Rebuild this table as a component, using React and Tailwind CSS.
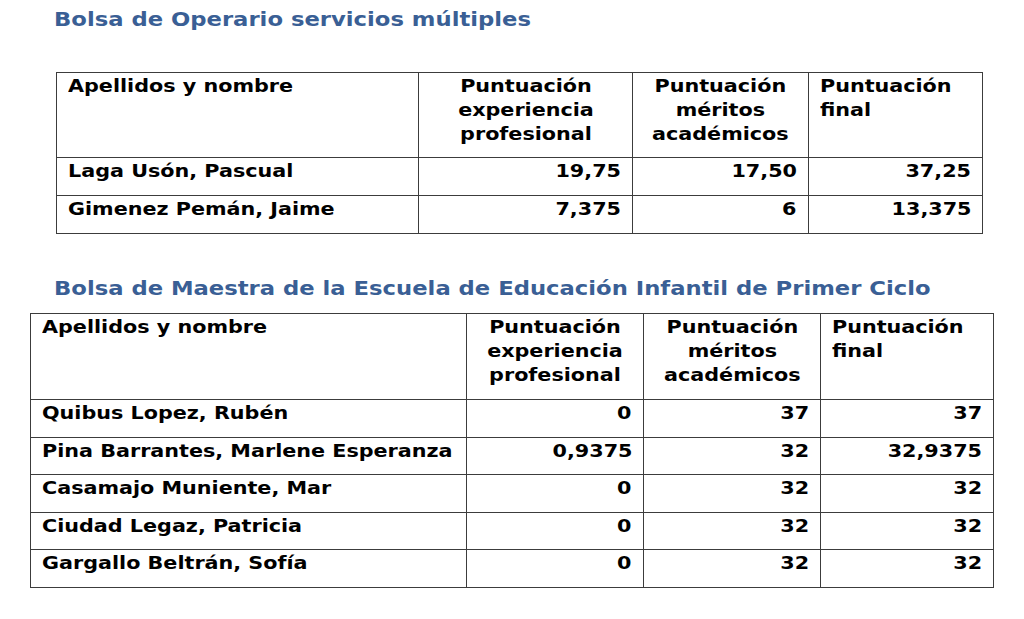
const table1 = [
  ['Laga Usón, Pascual', '19,75', '17,50', '37,25'],
  ['Gimenez Pemán, Jaime', '7,375', '6', '13,375'],
];

const table2 = [
  ['Quibus Lopez, Rubén', '0', '37', '37'],
  ['Pina Barrantes, Marlene Esperanza', '0,9375', '32', '32,9375'],
  ['Casamajo Muniente, Mar', '0', '32', '32'],
  ['Ciudad Legaz, Patricia', '0', '32', '32'],
  ['Gargallo Beltrán, Sofía', '0', '32', '32'],
];

// the source page is drawn a bit wide, so text is stretched horizontally
const wideL = 'inline-block origin-left scale-x-[1.15] whitespace-nowrap';
const wideC = 'inline-block origin-center scale-x-[1.15] whitespace-nowrap';
const wideR = 'inline-block origin-right scale-x-[1.15] whitespace-nowrap';

function ScoreTable({ rows, widths, headPad, rowPad, className }) {
  const cell = 'border border-[#3c3c3c] px-[11px] pt-[1px] align-top';
  const th = `${cell} ${headPad}`;
  const td = `${cell} ${rowPad}`;
  return (
    <table className={`table-fixed border-collapse text-[18px] leading-6 font-bold text-black ${className}`}>
      <colgroup>
        {widths.map((w, i) => (
          <col key={i} style={{ width: w }} />
        ))}
      </colgroup>
      <thead>
        <tr>
          <th className={`${th} text-left`}>
            <span className={wideL}>Apellidos y nombre</span>
          </th>
          <th className={`${th} text-center`}>
            <span className={wideC}>Puntuación<br />experiencia<br />profesional</span>
          </th>
          <th className={`${th} text-center`}>
            <span className={wideC}>Puntuación<br />méritos<br />académicos</span>
          </th>
          <th className={`${th} text-left`}>
            <span className={wideL}>Puntuación<br />final</span>
          </th>
        </tr>
      </thead>
      <tbody>
        {rows.map((r) => (
          <tr key={r[0]}>
            <td className={`${td} text-left`}>
              <span className={wideL}>{r[0]}</span>
            </td>
            <td className={`${td} text-right`}>
              <span className={wideR}>{r[1]}</span>
            </td>
            <td className={`${td} text-right`}>
              <span className={wideR}>{r[2]}</span>
            </td>
            <td className={`${td} text-right`}>
              <span className={wideR}>{r[3]}</span>
            </td>
          </tr>
        ))}
      </tbody>
    </table>
  );
}

export default function App() {
  return (
    <div className="w-[1024px] h-[619px] bg-white font-['DejaVu_Sans',sans-serif] overflow-hidden">
      <h2 className="ml-[54px] pt-[5px] text-[20px] leading-7 font-bold text-[#3a5f95]">
        <span className="inline-block origin-left scale-x-[1.135] whitespace-nowrap">
          Bolsa de Operario servicios múltiples
        </span>
      </h2>
      <ScoreTable
        rows={table1}
        widths={[362, 214, 176, 174]}
        headPad="pb-[11px]"
        rowPad="pb-[12px]"
        className="ml-[56px] mt-[39px] w-[926px]"
      />
      <h2 className="ml-[54px] mt-[40px] text-[20px] leading-7 font-bold text-[#3a5f95]">
        <span className="inline-block origin-left scale-x-[1.135] whitespace-nowrap">
          Bolsa de Maestra de la Escuela de Educación Infantil de Primer Ciclo
        </span>
      </h2>
      <ScoreTable
        rows={table2}
        widths={[436, 177, 177, 173]}
        headPad="pb-[12px]"
        rowPad="pb-[11.5px]"
        className="ml-[30px] mt-[11px] w-[963px]"
      />
    </div>
  );
}
